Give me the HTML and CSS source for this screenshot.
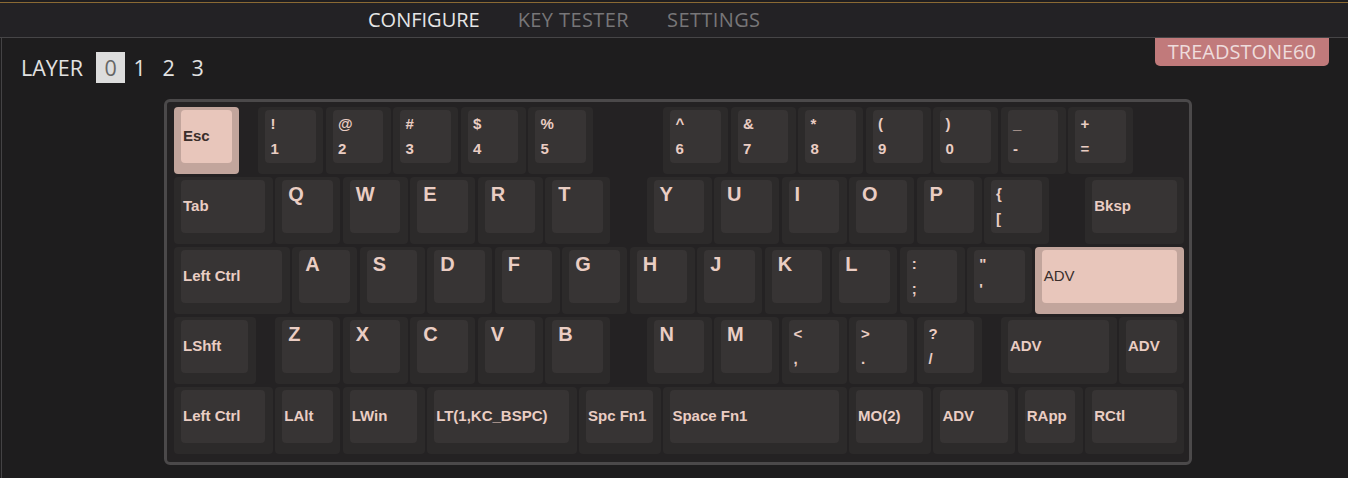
FILE: index.html
```html
<!DOCTYPE html>
<html>
<head>
<meta charset="utf-8">
<link rel="stylesheet" href="styles.css">
</head>
<body>
<div class="topgap"></div>
<nav class="nav">
  <a class="nav-item active">CONFIGURE</a>
  <a class="nav-item">KEY TESTER</a>
  <a class="nav-item">SETTINGS</a>
</nav>
<main class="main">
  <div class="layerbar">
    <div class="layers">
      <span class="layer-label">LAYER</span>
      <span class="layer sel">0</span>
      <span class="layer">1</span>
      <span class="layer">2</span>
      <span class="layer">3</span>
    </div>
    <div class="badge">TREADSTONE60</div>
  </div>
  <div class="case">
    <div class="row">
      <div class="key pink u1"><div class="face mod">Esc</div></div>
      <div class="gap g25"></div>
      <div class="key u1"><div class="face shift"><div>!</div><div>1</div></div></div>
      <div class="key u1"><div class="face shift"><div>@</div><div>2</div></div></div>
      <div class="key u1"><div class="face shift"><div>#</div><div>3</div></div></div>
      <div class="key u1"><div class="face shift"><div>$</div><div>4</div></div></div>
      <div class="key u1"><div class="face shift"><div>%</div><div>5</div></div></div>
      <div class="gap g1"></div>
      <div class="key u1"><div class="face shift"><div>^</div><div>6</div></div></div>
      <div class="key u1"><div class="face shift"><div>&amp;</div><div>7</div></div></div>
      <div class="key u1"><div class="face shift"><div>*</div><div>8</div></div></div>
      <div class="key u1"><div class="face shift"><div>(</div><div>9</div></div></div>
      <div class="key u1"><div class="face shift"><div>)</div><div>0</div></div></div>
      <div class="key u1"><div class="face shift"><div>_</div><div>-</div></div></div>
      <div class="key u1"><div class="face shift"><div>+</div><div>=</div></div></div>
    </div>
    <div class="row">
      <div class="key u15"><div class="face mod">Tab</div></div>
      <div class="key u1"><div class="face alpha">Q</div></div>
      <div class="key u1"><div class="face alpha">W</div></div>
      <div class="key u1"><div class="face alpha">E</div></div>
      <div class="key u1"><div class="face alpha">R</div></div>
      <div class="key u1"><div class="face alpha">T</div></div>
      <div class="gap g5"></div>
      <div class="key u1"><div class="face alpha">Y</div></div>
      <div class="key u1"><div class="face alpha">U</div></div>
      <div class="key u1"><div class="face alpha">I</div></div>
      <div class="key u1"><div class="face alpha">O</div></div>
      <div class="key u1"><div class="face alpha">P</div></div>
      <div class="key u1"><div class="face shift"><div>{</div><div>[</div></div></div>
      <div class="gap g5"></div>
      <div class="key u15"><div class="face mod">Bksp</div></div>
    </div>
    <div class="row">
      <div class="key u175"><div class="face mod">Left Ctrl</div></div>
      <div class="key u1"><div class="face alpha">A</div></div>
      <div class="key u1"><div class="face alpha">S</div></div>
      <div class="key u1"><div class="face alpha">D</div></div>
      <div class="key u1"><div class="face alpha">F</div></div>
      <div class="key u1"><div class="face alpha">G</div></div>
      <div class="key u1"><div class="face alpha">H</div></div>
      <div class="key u1"><div class="face alpha">J</div></div>
      <div class="key u1"><div class="face alpha">K</div></div>
      <div class="key u1"><div class="face alpha">L</div></div>
      <div class="key u1"><div class="face shift"><div>:</div><div>;</div></div></div>
      <div class="key u1"><div class="face shift"><div>"</div><div>'</div></div></div>
      <div class="key pink u225"><div class="face mod thin">ADV</div></div>
    </div>
    <div class="row">
      <div class="key u125"><div class="face mod">LShft</div></div>
      <div class="gap g25"></div>
      <div class="key u1"><div class="face alpha">Z</div></div>
      <div class="key u1"><div class="face alpha">X</div></div>
      <div class="key u1"><div class="face alpha">C</div></div>
      <div class="key u1"><div class="face alpha">V</div></div>
      <div class="key u1"><div class="face alpha">B</div></div>
      <div class="gap g5"></div>
      <div class="key u1"><div class="face alpha">N</div></div>
      <div class="key u1"><div class="face alpha">M</div></div>
      <div class="key u1"><div class="face shift"><div>&lt;</div><div>,</div></div></div>
      <div class="key u1"><div class="face shift"><div>&gt;</div><div>.</div></div></div>
      <div class="key u1"><div class="face shift"><div>?</div><div>/</div></div></div>
      <div class="gap g25"></div>
      <div class="key u175"><div class="face mod">ADV</div></div>
      <div class="key u1"><div class="face mod">ADV</div></div>
    </div>
    <div class="row">
      <div class="key u15"><div class="face mod">Left Ctrl</div></div>
      <div class="key u1"><div class="face mod">LAlt</div></div>
      <div class="key u125"><div class="face mod">LWin</div></div>
      <div class="key u225"><div class="face mod">LT(1,KC_BSPC)</div></div>
      <div class="key u125"><div class="face mod">Spc Fn1</div></div>
      <div class="key u275"><div class="face mod">Space Fn1</div></div>
      <div class="key u125"><div class="face mod">MO(2)</div></div>
      <div class="key u125"><div class="face mod">ADV</div></div>
      <div class="key u1"><div class="face mod">RApp</div></div>
      <div class="key u15"><div class="face mod">RCtl</div></div>
    </div>
  </div>
</main>
</body>
</html>
```
FILE: styles.css
```css
html, body {
  margin: 0;
  padding: 0;
  background: #1e1d1e;
  height: 100%;
  overflow: hidden;
}

.topgap {
  height: 2px;
  background: #1f1e20;
}

.nav {
  display: flex;
  height: 34px;
  background: #232225;
  border-top: 1px solid #8a6a34;
  border-bottom: 1px solid #464547;
  padding-left: 349px;
  font-family: "Open Sans", "Noto Sans", sans-serif;
  font-size: 20px;
  line-height: 34px;
}

.nav-item {
  padding: 0 19px;
  color: #777678;
  letter-spacing: 0.4px;
  cursor: pointer;
}

.nav-item.active {
  color: #e6e6e6;
  letter-spacing: 0;
}

.main {
  margin-left: 1px;
  border-left: 1px solid #444345;
  min-height: 440px;
}

.layerbar {
  display: flex;
  justify-content: space-between;
  align-items: flex-start;
  height: 61px;
  padding-right: 19px;
  font-family: "Open Sans", "Noto Sans", sans-serif;
  font-size: 20px;
}

.layers {
  display: flex;
  margin-top: 14px;
  padding-left: 19px;
  line-height: 31px;
  font-size: 21.5px;
  color: #e2e2e2;
}

.layer-label {
  margin-right: 13px;
}

.layer {
  width: 29px;
  text-align: center;
}

.layer.sel {
  background: #dddddd;
  color: #666666;
}

.badge {
  height: 28px;
  line-height: 28px;
  padding: 0 13px;
  background: #c17a7b;
  color: #eedcdc;
  border-radius: 0 0 5px 5px;
}

.case {
  width: fit-content;
  margin-left: 162px;
  border: 3px solid #4b494a;
  border-radius: 6px;
  background: #242223;
  padding: 5px 2.5px 5px 7px;
}

.row {
  display: flex;
  height: 70px;
}

.key {
  flex: none;
  box-sizing: border-box;
  height: 67px;
  margin-right: 2.5px;
  padding: 3px 7.5px 0 7px;
  background: #2c2a2a;
  border-radius: 4px;
}

.face {
  height: 53px;
  box-sizing: border-box;
  background: #373434;
  border-radius: 4px;
  color: #eacdc3;
  font-family: "Liberation Sans", Arial, sans-serif;
  font-weight: bold;
  white-space: nowrap;
  overflow: hidden;
}

.key.pink {
  background: #c2a59c;
}

.key.pink .face {
  background: #e8c6bb;
  color: #3a2e2b;
}

.face.mod {
  display: flex;
  align-items: center;
  padding: 0 0 3px 2px;
  font-size: 15px;
}

.face.thin {
  font-weight: normal;
}

.face.alpha {
  font-size: 20px;
  line-height: 20px;
  padding: 4px 0 0 6px;
}

.face.shift {
  font-size: 15px;
  line-height: 25px;
  padding: 1px 0 0 5px;
}

.gap {
  flex: none;
}

.u1 { width: 65px; }
.u125 { width: 81.875px; }
.u15 { width: 98.75px; }
.u175 { width: 115.625px; }
.u225 { width: 149.375px; }
.u275 { width: 183.125px; }

.g25 { width: 16.875px; }
.g5 { width: 33.75px; }
.g1 { width: 67.5px; }
```
